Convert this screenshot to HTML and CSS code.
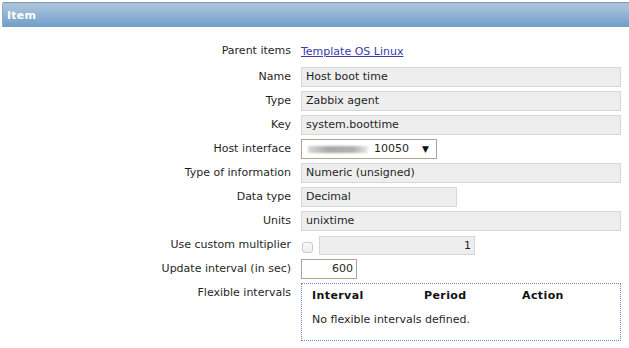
FILE: index.html
```html
<!DOCTYPE html>
<html>
<head>
<meta charset="utf-8">
<title>Item</title>
<link rel="stylesheet" href="styles.css">
</head>
<body>
<div class="header">Item</div>
<div class="form">
  <div class="label">Parent items</div>
  <div class="field parent"><a href="#" class="link">Template OS Linux</a></div>

  <div class="label">Name</div>
  <div class="field"><div class="ro full">Host boot time</div></div>

  <div class="label">Type</div>
  <div class="field"><div class="ro full">Zabbix agent</div></div>

  <div class="label">Key</div>
  <div class="field"><div class="ro full">system.boottime</div></div>

  <div class="label">Host interface</div>
  <div class="field">
    <div class="select"><span class="blur"></span><span class="port">10050</span><span class="arrow">▼</span></div>
  </div>

  <div class="label">Type of information</div>
  <div class="field"><div class="ro full">Numeric (unsigned)</div></div>

  <div class="label">Data type</div>
  <div class="field"><div class="ro medium">Decimal</div></div>

  <div class="label">Units</div>
  <div class="field"><div class="ro full">unixtime</div></div>

  <div class="label">Use custom multiplier</div>
  <div class="field multi">
    <input type="checkbox" class="check">
    <div class="ro mult">1</div>
  </div>

  <div class="label">Update interval (in sec)</div>
  <div class="field"><div class="edit">600</div></div>

  <div class="label">Flexible intervals</div>
  <div class="field">
    <div class="flex-box">
      <div class="frow head"><span>Interval</span><span>Period</span><span>Action</span></div>
      <div class="frow"><span class="empty">No flexible intervals defined.</span></div>
    </div>
  </div>
</div>
</body>
</html>
```

FILE: styles.css
```css
html, body {
  margin: 0;
  padding: 0;
  background: #ffffff;
}
body {
  font-family: "DejaVu Sans", Verdana, sans-serif;
  font-size: 11px;
  color: #1f1f1f;
  width: 629px;
  height: 348px;
  overflow: hidden;
}
.header {
  margin: 2px 0 0 2px;
  height: 25px;
  border-top: 1px solid #7c9ab6;
  border-left: 1px solid #8fabc8;
  border-top-left-radius: 2px;
  background: linear-gradient(to bottom, #aac2da 0%, #a6bfd8 20%, #88afd2 60%, #6f9ec8 100%);
  color: #ffffff;
  font-weight: bold;
  line-height: 25px;
  padding-left: 4px;
  box-sizing: border-box;
  letter-spacing: 0.2px;
}
.form {
  display: grid;
  grid-template-columns: 291px 320px;
  column-gap: 10px;
  row-gap: 4px;
  padding-top: 14px;
}
.label {
  text-align: right;
  line-height: 20px;
  height: 20px;
  white-space: nowrap;
}
.field {
  min-height: 20px;
  display: flex;
  align-items: center;
}
.parent {
  margin-bottom: 2px;
}
.link {
  color: #3a3aa8;
  text-decoration: underline;
}
.ro {
  height: 20px;
  box-sizing: border-box;
  border: 1px solid #d6d6d6;
  background: #eeeeee;
  line-height: 18px;
  padding: 0 4px;
  white-space: nowrap;
}
.full { width: 320px; }
.medium { width: 156px; }
.mult {
  width: 156px;
  text-align: right;
  padding-right: 3px;
  height: 19px;
  line-height: 17px;
}
.multi {
  gap: 6px;
}
.check {
  -webkit-appearance: none;
  appearance: none;
  margin: 4px 0 0 1px;
  width: 11px;
  height: 11px;
  box-sizing: border-box;
  border: 1px solid #cbcbcb;
  border-radius: 3px;
  background: linear-gradient(to bottom, #fbfbfb, #ececec);
}
.edit {
  width: 56px;
  height: 20px;
  box-sizing: border-box;
  border: 1px solid #aaa696;
  background: #ffffff;
  text-align: right;
  padding-right: 3px;
  line-height: 18px;
}
.select {
  width: 136px;
  height: 20px;
  box-sizing: border-box;
  border: 1px solid #aaa696;
  background: #ffffff;
  display: flex;
  align-items: center;
  line-height: 18px;
  padding-left: 6px;
}
.blur {
  display: inline-block;
  width: 60px;
  height: 7px;
  background: linear-gradient(to right, #d8d8d8, #a8a8a8 35%, #b0b0b0 75%, #e8e8e8);
  filter: blur(1.2px);
  margin-right: 6px;
}
.port {
  width: 48px;
}
.arrow {
  font-size: 9px;
  color: #111;
}
.flex-box {
  width: 320px;
  box-sizing: border-box;
  border: 1px dotted #6b8bce;
  padding: 0 10px 8px 10px;
}
.frow {
  display: grid;
  grid-template-columns: 112px 98px auto;
  height: 24px;
  line-height: 24px;
}
.frow.head {
  font-weight: bold;
  color: #111;
  letter-spacing: 0.4px;
}
.empty {
  grid-column: 1 / 4;
  white-space: nowrap;
}
```
